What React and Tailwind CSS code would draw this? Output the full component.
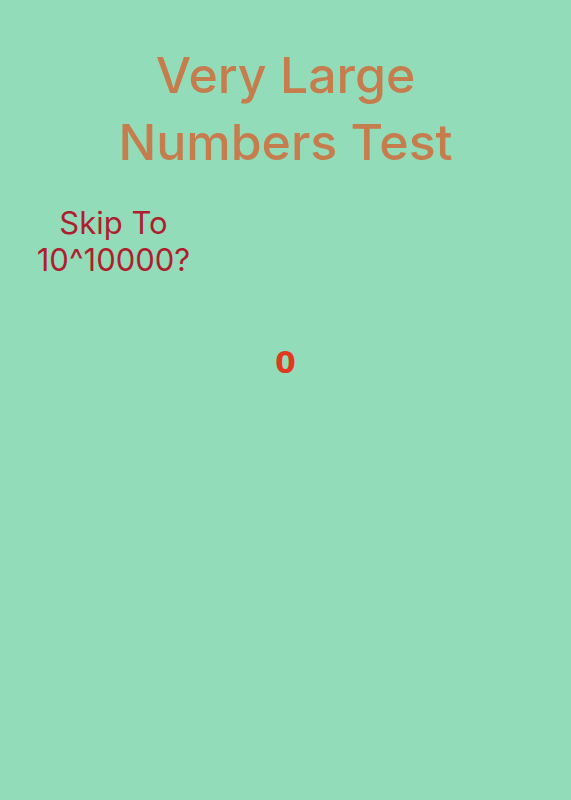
export default function App() {
  return (
    <div className="min-h-screen w-full bg-[#93dcba] flex flex-col">
      {/* Title */}
      <h1 className="pt-[42px] text-center text-[50px] leading-[67px] font-medium text-[#c67d4d] font-['Inter',sans-serif]">
        Very Large
        <br />
        Numbers Test
      </h1>

      {/* Skip button */}
      <div className="mt-[28px] w-[227px]">
        <button className="w-full text-center text-[31px] leading-[37px] text-[#ae1f2e] font-['Inter',sans-serif]">
          Skip To
          <br />
          10^10000?
        </button>
      </div>

      {/* Counter */}
      <div className="mt-[70px] text-center text-[30px] leading-[30px] font-black text-[#df3a1e] font-['DejaVu_Sans',sans-serif]">
        0
      </div>
    </div>
  )
}
